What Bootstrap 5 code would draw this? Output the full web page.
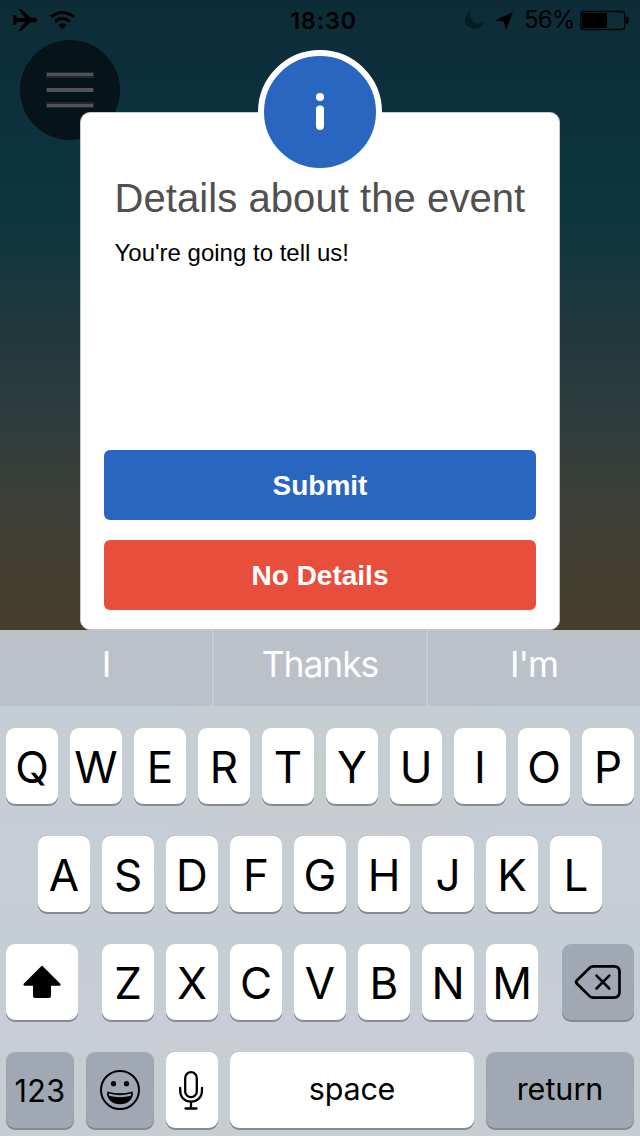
<!DOCTYPE html>
<html lang="en">
<head>
<meta charset="utf-8">
<meta name="viewport" content="width=device-width, initial-scale=1">
<title>Event details</title>
<link href="https://cdn.jsdelivr.net/npm/bootstrap@5.3.0/dist/css/bootstrap.min.css" rel="stylesheet">
<style>
body{width:640px;height:1136px;overflow:hidden;font-family:Inter,"Liberation Sans",sans-serif;color:#000;line-height:1}
.backdrop{height:630px;padding-top:112px;background:linear-gradient(180deg,#0d2c38 0,#0d2f3b 80px,#0c343f 180px,#10363f 230px,#23383d 340px,#303d3d 430px,#3c3f38 500px,#443e2e 590px,#463e2b 630px)}
.statusbar{height:40px;font-size:24px}
.statusbar svg,.menu-btn svg,.key svg,.info svg{display:block;flex:none}
.clock{top:9px;padding-left:7px;letter-spacing:.75px;font-weight:600;font-size:23.5px}
.percent{font-size:24px;letter-spacing:-.9px;width:50px;margin-left:7px}
.menu-btn{width:100px;height:100px;left:20px;top:40px;background:#06141a}
.dialog{width:480px;height:518px;border:1px solid #c6c8c9;border-radius:10px;padding:0 23px 19px;font-family:"Liberation Sans",Arial,sans-serif}
.info{width:124px;height:124px;border:6px solid #fff;background:#2966bf;top:-63px;left:177px}
.heading{font-size:40px;line-height:48px;color:#505050;margin:61px 0 0 10.500px;white-space:nowrap;letter-spacing:.07px}
.answer{font-size:24px;line-height:28px;margin:17px 0 0 10.500px}
.actions{gap:20px}
.action{height:70px;font-size:28px;font-weight:700;border:0;border-radius:6px;color:#fff;line-height:1;padding-top:8px}
.action-submit{background:#2966bf}.action-skip{background:#e84e3c}
.keyboard{height:506px;background:radial-gradient(ellipse 200px 170px at 335px 150px,#c7cdce,#c7cdce00),linear-gradient(#c5cdd5 15%,#c8cdd6 50%,#c5cdd5 62%,#c9cdd6 78%,#c8cdd1)}
.suggestions{height:76px;gap:2px;background:#c9cdd2;font-size:35.5px;letter-spacing:-1.1px;color:#fff}
.suggestions>div{background:#bac1c9;padding-bottom:6px}
.keys{padding:22px 6px 0;gap:32px}
.key-row{gap:12px;height:76px}
.key{width:52px;height:76px;flex:none;background:#fff;border-radius:9px;box-shadow:0 2px 0 #858a8e;font-size:44px;padding-top:1px}
.key:has(svg){padding-top:0}
.key-dark{background:#9fa8b3}
.key-72{width:72px}.key-68{width:68px}
.key-space,.key-return,.key-num{font-size:30.5px;padding-top:0;padding-bottom:2px}
.key-space{width:244px;letter-spacing:-.2px}.key-return{width:148px}
.key-num{padding-top:5px;letter-spacing:.4px}
</style>
</head>
<body>
<main class="backdrop position-relative">
  <header class="statusbar position-absolute top-0 w-100">
    <div class="d-flex justify-content-between h-100 align-items-center">
      <svg width="100" height="40" viewBox="0 0 100 40">
        <path d="M13 15h2l2.500 3h8L18 9h3.200l9.300 8.800H35q2.200.200 2.200 2.200T35 22.200h-4.500L21.200 31H18l7.500-9h-8L15 25h-2l.700-5z"/>
        <g fill="none" stroke="#000" stroke-width="2.900"><path d="M51 16.800Q62.500 8 74 16.800M55 21.600Q62.500 15.500 70 21.600"/></g>
        <path d="M58.200 25q4.300-3.400 8.600 0l-4.300 4.200z"/>
      </svg>
      <div class="d-flex align-items-center">
        <svg width="61" height="40" viewBox="0 0 61 40">
          <path fill="#061c25" d="M14.500 11A9.300 9.300 0 1 0 27 22.800Q20 25.200 16.200 20.500Q12.800 16 14.500 11z"/>
          <path d="M57 12L50 30l-2.500-8.800-9-.500z"/>
        </svg>
        <span class="percent">56%</span>
        <svg width="66" height="40" viewBox="0 0 66 40">
          <rect x="6.700" y="11.500" width="44" height="18" rx="3" fill="none" stroke="#000" stroke-width="1.300"/>
          <path d="M8 14q0-1 1-1h24v15H9q-1 0-1-1zM52 17q3 .300 3 3.500T52 24z"/>
        </svg>
      </div>
    </div>
    <time class="clock position-absolute start-50 translate-middle-x">18:30</time>
  </header>
  <button class="menu-btn position-absolute rounded-circle border-0 p-0" aria-label="Menu">
    <svg width="100" height="100" viewBox="0 0 100 100"><path fill="#20292d" d="M26 32h48v6H26zM26 48h48v4H26zM26 62h48v6H26z"/><path fill="#535353" d="M27 33h46v3H27zM27 48h46v4H27zM27 64h46v3H27z"/></svg>
  </button>
  <section class="dialog mx-auto bg-white position-relative d-flex flex-column">
    <div class="info position-absolute rounded-circle">
      <svg width="112" height="112" viewBox="0 0 112 112" fill="#fff"><circle cx="56" cy="41" r="4"/><rect x="52" y="49.500" width="8" height="24.500" rx="4"/></svg>
    </div>
    <h1 class="heading fw-normal">Details about the event</h1>
    <p class="answer">You're going to tell us!</p>
    <div class="actions d-grid mt-auto">
      <button class="btn action action-submit">Submit</button>
      <button class="btn action action-skip">No Details</button>
    </div>
  </section>
</main>
<section class="keyboard">
  <div class="suggestions d-flex">
    <div class="d-flex col align-items-center justify-content-center">I</div>
    <div class="d-flex col align-items-center justify-content-center">Thanks</div>
    <div class="d-flex col align-items-center justify-content-center">I'm</div>
  </div>
  <div class="keys d-flex flex-column">
    <div class="key-row d-flex justify-content-center">
      <div class="key d-flex align-items-center justify-content-center">Q</div><div class="key d-flex align-items-center justify-content-center">W</div><div class="key d-flex align-items-center justify-content-center">E</div><div class="key d-flex align-items-center justify-content-center">R</div><div class="key d-flex align-items-center justify-content-center">T</div><div class="key d-flex align-items-center justify-content-center">Y</div><div class="key d-flex align-items-center justify-content-center">U</div><div class="key d-flex align-items-center justify-content-center">I</div><div class="key d-flex align-items-center justify-content-center">O</div><div class="key d-flex align-items-center justify-content-center">P</div>
    </div>
    <div class="key-row d-flex justify-content-center">
      <div class="key d-flex align-items-center justify-content-center">A</div><div class="key d-flex align-items-center justify-content-center">S</div><div class="key d-flex align-items-center justify-content-center">D</div><div class="key d-flex align-items-center justify-content-center">F</div><div class="key d-flex align-items-center justify-content-center">G</div><div class="key d-flex align-items-center justify-content-center">H</div><div class="key d-flex align-items-center justify-content-center">J</div><div class="key d-flex align-items-center justify-content-center">K</div><div class="key d-flex align-items-center justify-content-center">L</div>
    </div>
    <div class="d-flex justify-content-between">
      <div class="key key-72"><svg width="72" height="76" viewBox="0 0 72 76"><path d="M36 21.500L54.500 40q.500 1.700-1 1.700H45V52q0 2-2 2H29q-2 0-2-2V41.700h-8.500q-1.500 0-1-1.700z"/></svg></div>
      <div class="key-row d-flex">
        <div class="key d-flex align-items-center justify-content-center">Z</div><div class="key d-flex align-items-center justify-content-center">X</div><div class="key d-flex align-items-center justify-content-center">C</div><div class="key d-flex align-items-center justify-content-center">V</div><div class="key d-flex align-items-center justify-content-center">B</div><div class="key d-flex align-items-center justify-content-center">N</div><div class="key d-flex align-items-center justify-content-center">M</div>
      </div>
      <div class="key key-dark key-72"><svg width="72" height="76" viewBox="0 0 72 76" fill="none" stroke="#000" stroke-width="2.700" stroke-linecap="round" stroke-linejoin="round"><path d="M31.500 22.300H52q5.500 0 5.500 5.500v20q0 5.800-5.500 5.800H31.500q-2.500 0-4-1.500L14.800 39.500q-1.500-1.500 0-3L27.500 24q1.500-1.700 4-1.700z"/><path stroke-width="2.500" d="M34.500 31.700l12.800 12.800m0-12.800L34.500 44.500"/></svg></div>
    </div>
    <div class="key-row d-flex">
      <div class="key key-dark key-68 key-num d-flex align-items-center justify-content-center">123</div>
      <div class="key key-dark key-68"><svg width="68" height="76" viewBox="0 0 68 76"><circle cx="34" cy="38" r="19" fill="none" stroke="#000" stroke-width="2"/><circle cx="27.500" cy="31.700" r="2.600"/><circle cx="40.500" cy="31.700" r="2.600"/><path fill="none" stroke="#000" stroke-width="1.800" stroke-linejoin="round" d="M22 40.500q12 3.500 24 0C46.500 47 41 51.300 34 51.300S21.500 47 22 40.500z"/><path d="M23 43.800q11 2.800 22 0C44 49 39 51.300 34 51.300S24 49 23 43.800z"/></svg></div>
      <div class="key"><svg width="52" height="76" viewBox="0 0 52 76" fill="none" stroke="#000" stroke-width="2.300" stroke-linecap="round"><rect x="19.200" y="20.200" width="11.600" height="25" rx="5.800"/><path d="M14.200 36v2.500c0 7 5 11.200 10.800 11.200S36 45.500 36 38.500V36M25 50v6M19.500 56.500h11"/></svg></div>
      <div class="key key-space d-flex align-items-center justify-content-center">space</div>
      <div class="key key-dark key-return d-flex align-items-center justify-content-center">return</div>
    </div>
  </div>
</section>
<script src="https://cdn.jsdelivr.net/npm/bootstrap@5.3.0/dist/js/bootstrap.bundle.min.js"></script>
</body>
</html>
